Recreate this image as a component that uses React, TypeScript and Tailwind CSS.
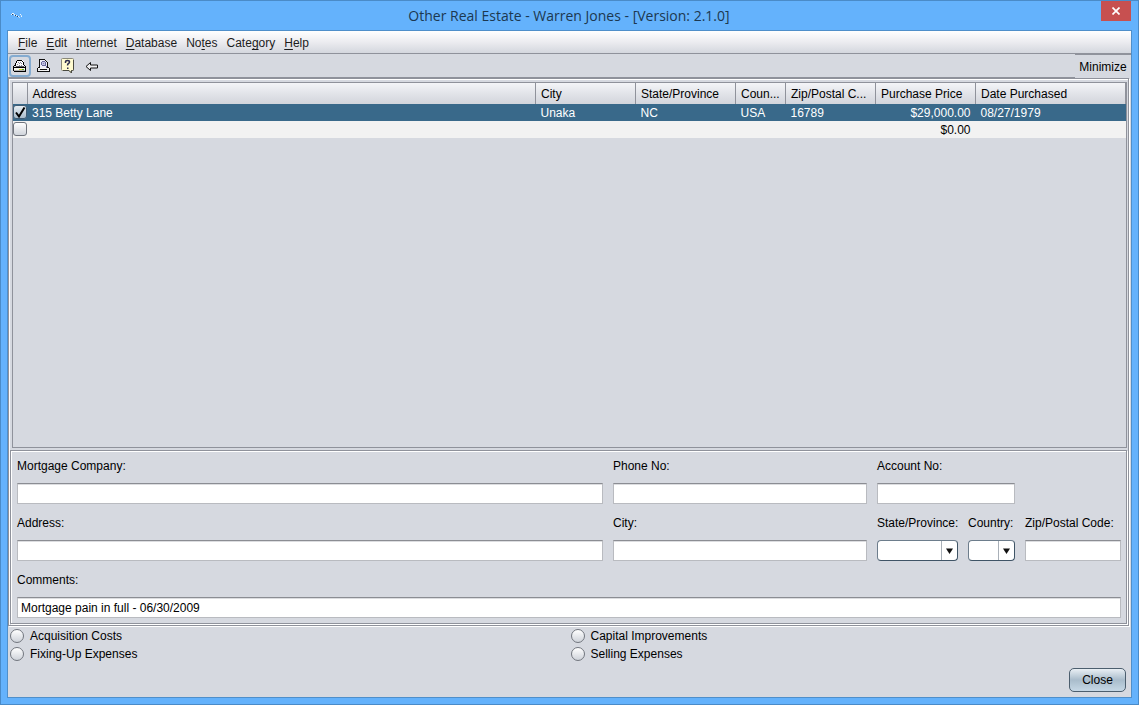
import { useState } from 'react'
import type { ReactNode } from 'react'

const etched = 'border border-[#8f929b] shadow-[inset_1px_1px_0_#fff,1px_1px_0_#fff]'
const inputClass =
  'block h-[21px] w-full min-w-0 border border-[#b9bbc0] border-t-[#8b8d93] bg-white px-[3px] shadow-[inset_0_1px_0_#dcdde0] outline-none'

const menus = [
  { before: '', key: 'F', after: 'ile' },
  { before: '', key: 'E', after: 'dit' },
  { before: '', key: 'I', after: 'nternet' },
  { before: '', key: 'D', after: 'atabase' },
  { before: 'No', key: 't', after: 'es' },
  { before: 'Cate', key: 'g', after: 'ory' },
  { before: '', key: 'H', after: 'elp' }
]

const columns = [
  { title: 'Address', width: '' },
  { title: 'City', width: 'w-[100px]' },
  { title: 'State/Province', width: 'w-[100px]' },
  { title: 'Country', short: 'Coun...', width: 'w-[50px]' },
  { title: 'Zip/Postal Code', short: 'Zip/Postal C...', width: 'w-[90px]' },
  { title: 'Purchase Price', width: 'w-[100px]' },
  { title: 'Date Purchased', width: 'w-[150px]' }
]

const properties = [
  { id: 1, checked: true, address: '315 Betty Lane', city: 'Unaka', state: 'NC', country: 'USA', zip: '16789', price: '$29,000.00', date: '08/27/1979' },
  { id: 2, checked: false, address: '', city: '', state: '', country: '', zip: '', price: '$0.00', date: '' }
]

const costs = ['Acquisition Costs', 'Capital Improvements', 'Fixing-Up Expenses', 'Selling Expenses']

function AppIcon() {
  return (
    <svg width="12" height="6" viewBox="0 0 12 6" shapeRendering="crispEdges">
      <path d="M1 0h2v1h-2zM0 1h1v1h-1zM3 1h1v1h-1zM5 2h1v1h-1zM7 3h1v1h-1zM9 1h1v1h-1zM10 3h1v1h-1z" fill="#e8f2fb" />
      <path d="M1 1h1v1h-1zM4 2h1v1h-1zM6 3h1v1h-1z" fill="#2c4766" />
      <path d="M3 2h1v1h-1zM8 4h1v1h-1zM10 2h1v1h-1z" fill="#c4dcf2" />
    </svg>
  )
}

function PrintIcon() {
  return (
    <svg width="14" height="14" viewBox="0 0 14 14" shapeRendering="crispEdges">
      <path d="M4 1h5l2 2v4h-8v-3h1z" fill="#fff" />
      <path d="M4 1h5v1h-5zM3 2h1v2h-1zM2 4h1v2h-1zM9 2h1v1h-1zM10 3h1v3h-1zM1 6h2v1h-2zM11 6h1v1h-1zM0 7h1v5h-1zM12 7h1v5h-1zM1 8h11v1h-11zM1 12h12v1h-12z" fill="#000" />
      <path d="M3 7h8v1h-8z" fill="#55555c" />
      <path d="M1 9h11v3h-11z" fill="#f6f6ea" />
      <path d="M1 11h11v1h-11z" fill="#b4b4b4" />
      <path d="M6 10h3v1h-3z" fill="#d8d832" />
      <path d="M9 10h2v1h-2z" fill="#55a832" />
      <path d="M5 3h1v1h-1zM7 3h1v1h-1zM4 5h1v1h-1zM6 4h1v1h-1zM8 4h1v1h-1zM6 6h1v1h-1zM8 6h1v1h-1z" fill="#8a8b9c" />
    </svg>
  )
}

function PreviewIcon() {
  return (
    <svg width="14" height="14" viewBox="0 0 14 14" shapeRendering="crispEdges">
      <path d="M3 1h5l3 3v5h-8z" fill="#ececf6" />
      <path d="M2 0h6v1h-6zM2 1h1v7h-1zM8 1h1v1h-1zM9 2h1v1h-1zM10 3h1v5h-1zM1 8h2v1h-2zM10 8h2v1h-2zM0 9h1v4h-1zM12 9h1v4h-1zM0 12h13v1h-13zM3 10h7v1h-7z" fill="#111" />
      <path d="M1 9h11v1h-11zM1 11h11v1h-11z" fill="#f5f5f5" />
      <path d="M5 2h3v1h-3zM4 3h1v3h-1zM8 3h1v3h-1zM5 6h3v1h-3zM8 6h1v1h-1zM9 7h1v2h-1z" fill="#68689c" />
      <path d="M5 3h3v3h-3z" fill="#c2c2e4" />
      <path d="M6 4h1v1h-1z" fill="#8484b4" />
    </svg>
  )
}

function HelpIcon() {
  return (
    <svg width="16" height="16" viewBox="0 0 16 16">
      <path d="M2.500 .5h10q1 0 1 1v10q0 1-1 1h-1v2.500l-2.500-2.500h-6.500q-1 0-1-1v-10q0-1 1-1z" fill="#fffbd0" stroke="#8a8878" />
      <path d="M13.500 2v9.500q0 1-1 1h-1v2.500l-2.500-2.500h-6" fill="none" stroke="#4a4a40" />
      <path d="M5.500 5v-1q0-1.500 2-1.500t2 1.500q0 1-1 1.500t-1 2" fill="none" stroke="#2c2c4c" strokeWidth="1.500" />
      <path d="M7 9.500h1.500v1.500h-1.500z" fill="#2c2c4c" />
    </svg>
  )
}

function BackIcon() {
  return (
    <svg width="14" height="12" viewBox="0 0 14 12">
      <path d="M1 6.500l4.500-4v2.500h7v3h-7v2.500z" fill="#f0f0f2" stroke="#111" />
    </svg>
  )
}

function ToolButton({ label, focused, children }: { label: string; focused?: boolean; children: ReactNode }) {
  return (
    <button
      aria-label={label}
      className={`flex h-[22px] w-[22px] items-center justify-center rounded-[4px] border-2 ${focused ? 'border-[#84abd0]' : 'border-transparent'}`}
    >
      {children}
    </button>
  )
}

function Field({ id, label, className = '', defaultValue = '' }: { id: string; label: string; className?: string; defaultValue?: string }) {
  return (
    <div className={className}>
      <label htmlFor={id} className="mb-[9px] block whitespace-nowrap">{label}</label>
      <input id={id} type="text" defaultValue={defaultValue} className={inputClass} />
    </div>
  )
}

function SelectField({ id, label }: { id: string; label: string }) {
  return (
    <div>
      <label htmlFor={id} className="mb-[9px] block whitespace-nowrap">{label}</label>
      <div className="relative">
        <select
          id={id}
          className="block h-[21px] w-full appearance-none rounded-[4px] border border-[#6d7d8c] border-r-[#3f5466] border-b-[#3f5466] bg-white outline-none"
        >
          <option value=""></option>
        </select>
        <span className="pointer-events-none absolute inset-y-px right-px flex w-4 items-center justify-center border-l border-[#a9b0b8]">
          <svg width="7" height="6" viewBox="0 0 7 6">
            <path d="M0 .5h7l-3.500 5.500z" fill="#111" />
          </svg>
        </span>
      </div>
    </div>
  )
}

export default function App() {
  const [rows, setRows] = useState(properties)

  const toggle = (id: number) => setRows(rows.map((r) => (r.id === id ? { ...r, checked: !r.checked } : r)))

  return (
    <div className="flex min-h-screen flex-col border border-[#4a8bc8] bg-[#64b2fc] px-[6px] pb-[6px] font-['Liberation_Sans',Arial,sans-serif] text-xs leading-4 text-black">
      {/* Title bar */}
      <header className="grid h-[29px] grid-cols-[1fr_auto_1fr] items-center pr-px">
        <span className="pl-1"><AppIcon /></span>
        <h1 className="font-['Open_Sans','Noto_Sans',sans-serif] text-sm text-[#1c3850]">Other Real Estate - Warren Jones - [Version: 2.1.0]</h1>
        <button aria-label="Close window" className="flex h-5 w-[30px] items-center justify-center self-start justify-self-end bg-[#c75050]">
          <svg width="8" height="8" viewBox="0 0 8 8">
            <path d="M.5 .5l7 7M7.500 .5l-7 7" stroke="#fff" strokeWidth="1.700" />
          </svg>
        </button>
      </header>

      <div className="flex flex-1 flex-col border border-[#4f8fca] bg-[#d6d9e0]">
        <nav className="flex h-[23px] items-center gap-[9px] border-b border-[#8f929b] bg-linear-to-b from-white via-[#ececf0] to-[#d4d7de] px-[10px] pt-[2px]">
          {menus.map((m) => (
            <button key={m.key + m.after} className="text-[#1c1c1c]">
              {m.before}
              <span className="underline underline-offset-2">{m.key}</span>
              {m.after}
            </button>
          ))}
        </nav>

        {/* Toolbar */}
        <div className="flex h-6">
          <div className="flex flex-1 items-center gap-[2px] border-b border-[#8f929b] pl-px">
            <ToolButton label="Print" focused><PrintIcon /></ToolButton>
            <ToolButton label="Print preview"><PreviewIcon /></ToolButton>
            <ToolButton label="Help"><HelpIcon /></ToolButton>
            <ToolButton label="Back"><BackIcon /></ToolButton>
          </div>
          <button className="w-14 border-t border-[#8f929b]">Minimize</button>
        </div>

        <main className={`mr-[2px] flex flex-1 flex-col gap-[2px] p-px ${etched}`}>
          <section className="mt-[2px] ml-[2px] flex-1 border border-[#8f929b]">
            <table className="w-full table-fixed border-collapse">
              <thead>
                <tr className="h-[21px] bg-linear-to-b from-[#f4f5f8] via-[#e2e4e9] to-[#d2d5dc]">
                  <th aria-label="Selected" className="w-[14px] border-r border-[#8f929b] p-0" />
                  {columns.map((c) => (
                    <th key={c.title} title={c.title} className={`overflow-hidden border-r border-[#8f929b] py-0 pr-0 pl-[5px] text-left font-normal whitespace-nowrap ${c.width}`}>
                      {c.short ?? c.title}
                    </th>
                  ))}
                </tr>
              </thead>
              <tbody>
                {rows.map((r, i) => (
                  <tr key={r.id} className={i === 0 ? 'bg-[#39698a] text-white' : 'bg-[#f2f2f2]'}>
                    <td className="p-0">
                      <label className="relative block h-4 w-[14px]">
                        <input
                          type="checkbox"
                          aria-label={`Select row ${r.id}`}
                          checked={r.checked}
                          onChange={() => toggle(r.id)}
                          className="mt-px block h-[14px] w-[14px] appearance-none rounded-[3px] border border-[#6f747d] bg-linear-to-b from-white to-[#d0d4db] checked:border-[#3f5b73] checked:from-[#e8eef3] checked:to-[#a9bccb]"
                        />
                        {r.checked && (
                          <svg className="pointer-events-none absolute top-px left-px" width="12" height="13" viewBox="0 0 12 13">
                            <path d="M2 6.500l3 4 5.500-9" fill="none" stroke="#000" strokeWidth="2" />
                          </svg>
                        )}
                      </label>
                    </td>
                    <td className="px-[5px] py-0">{r.address}</td>
                    <td className="px-[5px] py-0">{r.city}</td>
                    <td className="px-[5px] py-0">{r.state}</td>
                    <td className="px-[5px] py-0">{r.country}</td>
                    <td className="px-[5px] py-0">{r.zip}</td>
                    <td className="px-[5px] py-0 text-right">{r.price}</td>
                    <td className="px-[5px] py-0">{r.date}</td>
                  </tr>
                ))}
              </tbody>
            </table>
          </section>

          {/* Mortgage details */}
          <form className={`grid grid-cols-[1fr_254px_81px_47px_96px] gap-x-[10px] gap-y-[11px] pt-[7px] pr-[5px] pb-[5px] pl-[6px] ${etched}`}>
            <Field id="company" label="Mortgage Company:" />
            <Field id="phone" label="Phone No:" />
            <Field id="account" label="Account No:" className="col-span-2" />
            <Field id="address" label="Address:" className="col-start-1" />
            <Field id="city" label="City:" />
            <SelectField id="state" label="State/Province:" />
            <SelectField id="country" label="Country:" />
            <Field id="zip" label="Zip/Postal Code:" />
            <Field id="comments" label="Comments:" className="col-span-full" defaultValue="Mortgage pain in full - 06/30/2009" />
          </form>
        </main>

        <fieldset className="mt-px grid grid-cols-2 pl-[2px]">
          {costs.map((c) => (
            <label key={c} className="flex h-[18px] items-center gap-[6px]">
              <input
                type="radio"
                name="costs"
                className="h-[14px] w-[14px] appearance-none rounded-full border border-[#72767e] bg-linear-to-b from-white to-[#cfd3da] checked:border-4"
              />
              {c}
            </label>
          ))}
        </fieldset>

        <footer className="flex justify-end px-[5px] py-[5px]">
          <button className="h-6 w-[57px] rounded-[5px] border border-[#4c5e6e] bg-linear-to-b from-[#e9eff4] via-[#a9bccb] to-[#c6d8e6]">Close</button>
        </footer>
      </div>
    </div>
  )
}
